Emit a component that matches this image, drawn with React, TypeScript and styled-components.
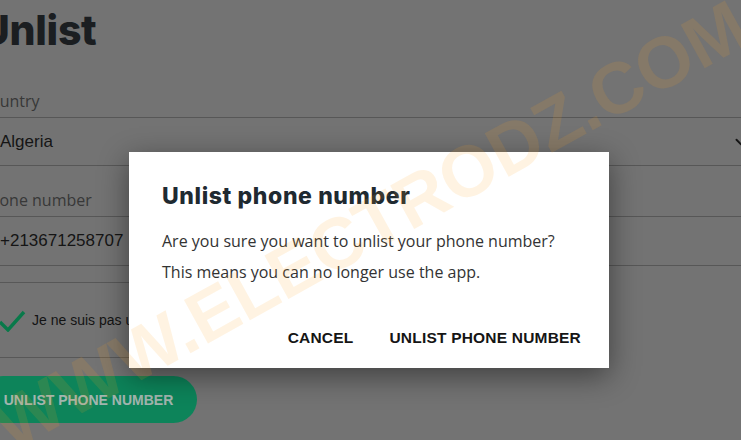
import React from 'react';
import styled, { createGlobalStyle } from 'styled-components';
import { ChevronDown } from 'lucide-react';

const GlobalStyle = createGlobalStyle`
  html, body {
    margin: 0;
    padding: 0;
    width: 741px;
    height: 440px;
    overflow: hidden;
    background: #9a9a9a;
  }
  * { box-sizing: border-box; }
`;

const Screen = styled.div`
  position: relative;
  width: 741px;
  height: 440px;
  overflow: hidden;
`;

// page scrolled sideways a bit, so the left edge is cut off
const Page = styled.div`
  margin-left: -20px;
  width: 800px;
  padding-top: 6px;
  display: flex;
  flex-direction: column;
`;

const Heading = styled.h1`
  margin: 0 0 35px;
  font-family: Inter, "Liberation Sans", sans-serif;
  font-weight: 800;
  font-size: 41px;
  line-height: 48px;
  color: #24292d;
  letter-spacing: -0.3px;
`;

const Label = styled.div`
  font-family: "Open Sans", sans-serif;
  font-size: 16px;
  line-height: 24px;
  color: #4b4b4b;
  margin-bottom: 4px;
`;

const Field = styled.div<{ $h: number }>`
  display: flex;
  align-items: center;
  justify-content: space-between;
  height: ${p => p.$h}px;
  padding-left: 20px;
  border-top: 1px solid #747474;
  border-bottom: 1px solid #747474;
  font-family: "Liberation Sans", Arial, sans-serif;
  font-size: 17px;
  color: #1c1c1c;
`;

const Chevron = styled.span`
  display: flex;
  margin-right: 30px;
  color: #1c1c1c;
`;

const Group = styled.div<{ $gap: number }>`
  margin-bottom: ${p => p.$gap}px;
`;

const Captcha = styled.div`
  width: 304px;
  height: 76px;
  border-top: 1px solid #767676;
  border-bottom: 1px solid #767676;
  display: flex;
  align-items: center;
  gap: 6px;
  padding-left: 18px;
  margin-bottom: 18px;
  font-family: "Liberation Sans", Arial, sans-serif;
  font-size: 14px;
  color: #1a1a1a;
  white-space: nowrap;
`;

const PillButton = styled.button`
  align-self: flex-start;
  height: 47px;
  width: 217px;
  border: none;
  border-radius: 24px;
  background: #12b079;
  color: rgba(255, 255, 255, 0.85);
  font-family: "Liberation Sans", Arial, sans-serif;
  font-weight: 700;
  font-size: 14px;
  padding: 0;
  white-space: nowrap;
  text-align: center;
`;

const Backdrop = styled.div`
  position: absolute;
  inset: 0;
  background: rgba(0, 0, 0, 0.25);
`;

const Dialog = styled.div`
  position: absolute;
  left: 129px;
  top: 152px;
  width: 480px;
  height: 216px;
  background: #fff;
  box-shadow: 0 8px 28px rgba(0, 0, 0, 0.45);
  padding: 28px 18px 12px 33px;
  display: flex;
  flex-direction: column;
`;

const DialogTitle = styled.h2`
  margin: 0 0 17px;
  font-family: Inter, "Liberation Sans", sans-serif;
  font-weight: 800;
  font-size: 23px;
  letter-spacing: 0.6px;
  line-height: 32px;
  color: #1f2a31;
`;

const Text = styled.p`
  margin: 0 0 7px;
  font-family: "Open Sans", sans-serif;
  font-size: 16px;
  line-height: 24px;
  color: #333;
`;

const Actions = styled.div`
  margin-top: auto;
  display: flex;
  justify-content: flex-end;
  gap: 16px;
`;

const TextButton = styled.button`
  height: 36px;
  padding: 0 10px;
  border: none;
  background: none;
  font-family: "Liberation Sans", Arial, sans-serif;
  font-weight: 700;
  font-size: 15.5px;
  letter-spacing: 0.2px;
  color: #151515;
`;

const Watermark = styled.div`
  position: absolute;
  left: 370px;
  top: 225px;
  transform: translate(-50%, -50%) rotate(-29deg);
  white-space: nowrap;
  font-family: "Liberation Sans", Arial, sans-serif;
  font-weight: 700;
  font-size: 72px;
  color: rgba(255, 165, 30, 0.13);
  pointer-events: none;
`;

const Check = () => (
  <svg width="28" height="24" viewBox="0 0 28 24">
    <path d="M2 14 L10 22 L26 4" fill="none" stroke="#0da263" strokeWidth="3.4" />
  </svg>
);

export default function App() {
  return (
    <Screen>
      <GlobalStyle />
      <Page>
        <Heading>Unlist</Heading>
        <Group $gap={22}>
          <Label>Country</Label>
          <Field $h={49}>
            Algeria
            <Chevron><ChevronDown size={18} strokeWidth={2.5} /></Chevron>
          </Field>
        </Group>
        <Group $gap={16}>
          <Label>Phone number</Label>
          <Field $h={50}>+213671258707</Field>
        </Group>
        <Captcha>
          <Check />
          <span>Je ne suis pas un robot</span>
        </Captcha>
        <PillButton>UNLIST PHONE NUMBER</PillButton>
      </Page>
      <Backdrop />
      <Dialog>
        <DialogTitle>Unlist phone number</DialogTitle>
        <Text>Are you sure you want to unlist your phone number?</Text>
        <Text>This means you can no longer use the app.</Text>
        <Actions>
          <TextButton>CANCEL</TextButton>
          <TextButton>UNLIST PHONE NUMBER</TextButton>
        </Actions>
      </Dialog>
      <Watermark>WWW.ELECTRODZ.COM</Watermark>
    </Screen>
  );
}
